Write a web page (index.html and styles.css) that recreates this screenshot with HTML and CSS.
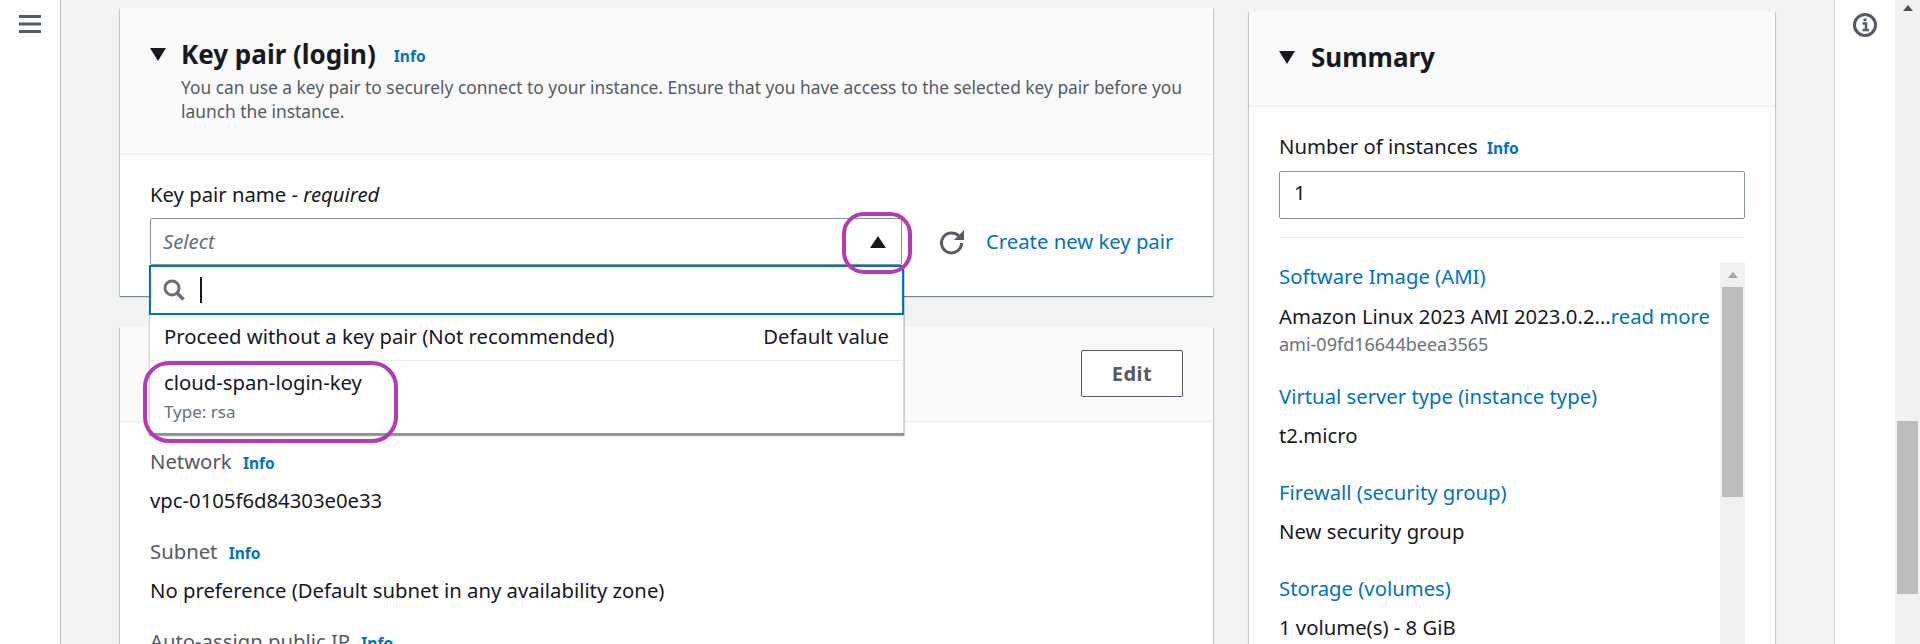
FILE: index.html
```html
<!DOCTYPE html>
<html lang="en">

<head>
	<meta charset="utf-8" />
	<title>Launch an instance</title>
	<link rel="stylesheet" href="styles.css">
</head>

<body>
	<div class="page">
		<nav class="side_nav">
			<svg class="menu_icon" width="22" height="18" viewBox="0 0 22 18"><path d="M0 1.500h22M0 9h22M0 16.500h22" stroke="#545b64" stroke-width="3" fill="none" /></svg>
		</nav>

		<main class="form_col">
			<section class="card keypair_card">
				<header class="card_head">
					<div class="head_title">
						<span class="caret"></span>
						<h2>Key pair (login)</h2>
						<a class="info">Info</a>
					</div>
					<p class="head_desc">You can use a key pair to securely connect to your instance. Ensure that you have access to the selected key pair before you launch the instance.</p>
				</header>
				<div class="keypair_body">
					<div class="field_label">Key pair name - <em>required</em></div>
					<div class="keypair_row">
						<div class="select_wrap">
							<div class="select_box">
								<span class="placeholder">Select</span>
								<span class="caret_up"></span>
							</div>
							<div class="dropdown">
								<div class="search_box">
									<svg width="22" height="22" viewBox="0 0 22 22"><circle cx="9" cy="9" r="7" fill="none" stroke="#687078" stroke-width="3" /><path d="M14 14l6.500 6.500" stroke="#687078" stroke-width="3.500" fill="none" /></svg>
									<span class="text_cursor"></span>
								</div>
								<div class="option option_first">
									<span>Proceed without a key pair (Not recommended)</span>
									<span>Default value</span>
								</div>
								<div class="option option_last">
									<div>cloud-span-login-key</div>
									<div class="option_type">Type: rsa</div>
								</div>
							</div>
							<span class="mark mark_caret"></span>
							<span class="mark mark_option"></span>
						</div>
						<svg class="refresh_icon" width="26" height="26" viewBox="0 0 26 26"><path d="M19.500 6.800A10 10 0 1 0 22.500 14" fill="none" stroke="#545b64" stroke-width="3" /><path d="M25 1v10H15z" fill="#545b64" /></svg>
						<a class="link create_link">Create new key pair</a>
					</div>
				</div>
			</section>

			<section class="card network_card">
				<header class="card_head network_head">
					<button class="edit_btn">Edit</button>
				</header>
				<div class="network_body">
					<div class="net_item">
						<div class="net_label">Network <a class="info">Info</a></div>
						<div class="net_value">vpc-0105f6d84303e0e33</div>
					</div>
					<div class="net_item">
						<div class="net_label">Subnet <a class="info">Info</a></div>
						<div class="net_value">No preference (Default subnet in any availability zone)</div>
					</div>
					<div class="net_item">
						<div class="net_label">Auto-assign public IP <a class="info">Info</a></div>
					</div>
				</div>
			</section>
		</main>

		<aside class="summary_col">
			<section class="card summary_card">
				<header class="summary_head">
					<span class="caret"></span>
					<h2>Summary</h2>
				</header>
				<div class="summary_body">
					<div class="field_label">Number of instances <a class="info">Info</a></div>
					<div class="count_input">1</div>
					<hr class="divider" />
					<div class="summary_scroll">
						<div class="summary_list">
							<div class="sum_item sum_item_first">
								<a class="link">Software Image (AMI)</a>
								<div class="sum_value">Amazon Linux 2023 AMI 2023.0.2...<a class="link">read more</a></div>
								<div class="sum_sub">ami-09fd16644beea3565</div>
							</div>
							<div class="sum_item">
								<a class="link">Virtual server type (instance type)</a>
								<div class="sum_value">t2.micro</div>
							</div>
							<div class="sum_item">
								<a class="link">Firewall (security group)</a>
								<div class="sum_value">New security group</div>
							</div>
							<div class="sum_item">
								<a class="link">Storage (volumes)</a>
								<div class="sum_value">1 volume(s) - 8 GiB</div>
							</div>
						</div>
						<div class="scrollbar inner_bar">
							<span class="scroll_arrow"></span>
							<span class="scroll_thumb"></span>
						</div>
					</div>
				</div>
			</section>
		</aside>

		<div class="help_panel">
			<svg width="24" height="24" viewBox="0 0 24 24"><circle cx="12" cy="12" r="10.500" fill="none" stroke="#545b64" stroke-width="3" /><path d="M9.500 10.500h3.500v6M9.500 17h6.500M10.500 6.800h3" fill="none" stroke="#545b64" stroke-width="2.500" /></svg>
		</div>

		<div class="scrollbar page_bar">
			<span class="scroll_arrow"></span>
			<span class="scroll_thumb"></span>
		</div>
	</div>
</body>

</html>
```

FILE: styles.css
```css
html, body {
	margin: 0;
	height: 644px;
	overflow: hidden;
}

body {
	background: #f2f3f3;
	color: #16191f;
	font-family: "Noto Sans", sans-serif;
	font-size: 20.300px;
	line-height: 24px;
}

h2 {
	margin: 0;
	font-size: 26px;
	line-height: 30px;
	font-weight: 700;
}

p {
	margin: 0;
}

.page {
	display: flex;
	height: 644px;
	overflow: hidden;
}

/* side navigation */
.side_nav {
	flex: none;
	width: 41px;
	background: #fff;
	border-right: 1px solid #b9bfbf;
	padding: 15px 0 0 19px;
}

.menu_icon {
	display: block;
}

/* cards */
.card {
	background: #fff;
	box-shadow: 0 1px 1px 0 rgba(0, 28, 36, .3), 1px 1px 1px 0 rgba(0, 28, 36, .15), -1px 1px 1px 0 rgba(0, 28, 36, .15);
}

.form_col {
	flex: none;
	width: 1093px;
	margin-left: 59px;
	padding-top: 8px;
}

.summary_col {
	flex: none;
	width: 526px;
	margin-left: 36px;
	padding-top: 11px;
}

.card_head {
	box-sizing: border-box;
	background: #fafafa;
	border-bottom: 1px solid #eaeded;
	height: 147px;
	padding: 31px 30px 0;
}

.head_title {
	display: flex;
	align-items: center;
}

.caret {
	flex: none;
	width: 0;
	height: 0;
	border-left: 8px solid transparent;
	border-right: 8px solid transparent;
	border-top: 13px solid #16191f;
	margin-right: 15px;
}

.head_title .info {
	margin-left: 18px;
	padding-top: 3px;
}

.head_desc {
	margin: 6px 0 0 31px;
	color: #545b64;
	font-size: 17.350px;
	line-height: 24px;
}

.info {
	color: #0073bb;
	font-size: 15.500px;
	font-weight: 700;
}

.link {
	color: #0073bb;
}

.keypair_body {
	height: 141px;
	padding: 27px 30px 0;
	box-sizing: border-box;
}

.field_label {
	line-height: 24px;
}

.keypair_row {
	display: flex;
	align-items: flex-start;
	margin-top: 12px;
}

.select_wrap {
	position: relative;
	width: 752px;
}

.select_box {
	box-sizing: border-box;
	height: 47px;
	border: 1px solid #879596;
	border-radius: 2px;
	background: #fff;
	display: flex;
	align-items: center;
	justify-content: space-between;
	padding: 0 15px 0 12px;
}

.placeholder {
	color: #687078;
	font-style: italic;
	margin-top: -2px;
}

.caret_up {
	width: 0;
	height: 0;
	border-left: 8px solid transparent;
	border-right: 8px solid transparent;
	border-bottom: 12px solid #16191f;
}

.refresh_icon {
	flex: none;
	margin: 11px 0 0 37px;
}

.create_link {
	margin: 11px 0 0 21px;
}

/* dropdown sits over the cards below */
.dropdown {
	position: absolute;
	left: -1px;
	top: 47px;
	width: 755px;
	background: #fff;
	z-index: 2;
	box-shadow: 0 1px 1px 0 rgba(0, 28, 36, .3), 1px 1px 1px 0 rgba(0, 28, 36, .15);
	border-bottom: 2px solid #879596;
	box-sizing: border-box;
}

.search_box {
	box-sizing: border-box;
	height: 50px;
	border: 2px solid #0073bb;
	display: flex;
	align-items: center;
	padding-left: 12px;
}

.text_cursor {
	width: 2px;
	height: 26px;
	background: #16191f;
	margin-left: 15px;
}

.option {
	border-left: 1px solid #d5dbdb;
	border-right: 1px solid #d5dbdb;
	padding: 0 14px;
}

.option_first {
	box-sizing: border-box;
	height: 46px;
	padding-bottom: 4px;
	display: flex;
	align-items: center;
	justify-content: space-between;
	border-bottom: 1px solid #eaeded;
}

.option_last {
	height: 72px;
	box-sizing: border-box;
	padding-top: 9px;
}

.option_type {
	color: #687078;
	font-size: 17px;
	margin-top: 6px;
}

/* purple hand drawn marks of the screenshot */
.mark {
	position: absolute;
	border: 4px solid #b53ab5;
	box-sizing: border-box;
	z-index: 3;
}

.mark_caret {
	left: 692px;
	top: -6px;
	width: 70px;
	height: 62px;
	border-radius: 22px;
}

.mark_option {
	left: -7px;
	top: 143px;
	width: 255px;
	height: 82px;
	border-radius: 26px;
}

/* network settings */
.network_card {
	margin-top: 31px;
}

.network_head {
	height: 95px;
	padding: 23px 30px 0 0;
	display: flex;
	justify-content: flex-end;
	align-items: flex-start;
}

.edit_btn {
	width: 102px;
	height: 47px;
	background: #fff;
	border: 1px solid #545b64;
	border-radius: 2px;
	color: #545b64;
	font-family: inherit;
	font-size: 20px;
	font-weight: 700;
	letter-spacing: .5px;
}

.network_body {
	padding: 27px 30px 0;
}

.net_item {
	height: 90px;
}

.net_label {
	color: #545b64;
	line-height: 24px;
}

.net_label .info {
	margin-left: 6px;
}

.net_value {
	margin-top: 13px;
	line-height: 24px;
}

/* summary */
.summary_head {
	box-sizing: border-box;
	height: 96px;
	background: #fafafa;
	border-bottom: 1px solid #eaeded;
	padding: 31px 30px 0;
	display: flex;
	align-items: flex-start;
}

.summary_head .caret {
	margin-top: 9px;
}

.summary_head h2 {
	margin-left: 1px;
}

.summary_body {
	padding: 27px 30px 0;
}

.summary_body .info {
	margin-left: 4px;
}

.count_input {
	box-sizing: border-box;
	height: 48px;
	margin-top: 11px;
	border: 1px solid #879596;
	border-radius: 2px;
	padding: 8px 14px;
}

.divider {
	border: 0;
	border-top: 1px solid #eaeded;
	margin: 18px 0 24px;
}

.summary_scroll {
	display: flex;
	justify-content: space-between;
	height: 400px;
}

.summary_list {
	padding-top: 2px;
}

.sum_item {
	margin-bottom: 33px;
}

.sum_item_first {
	margin-bottom: 28px;
}

.sum_item > .link {
	display: block;
	line-height: 24px;
}

.sum_value {
	margin-top: 15px;
	line-height: 24px;
}

.sum_item_first .sum_value {
	margin-top: 16px;
}

.sum_sub {
	color: #687078;
	font-size: 18px;
	line-height: 24px;
	margin-top: 4px;
}

/* help panel and scrollbars */
.help_panel {
	flex: none;
	box-sizing: border-box;
	width: 61px;
	margin-left: 59px;
	background: #fff;
	border-left: 1px solid #d5dbdb;
	padding: 13px 0 0 18px;
}

.help_panel svg {
	display: block;
}

.scrollbar {
	flex: none;
	background: #f1f1f1;
	display: flex;
	flex-direction: column;
	align-items: center;
}

.page_bar {
	width: 25px;
}

.inner_bar {
	width: 25px;
}

.scroll_arrow {
	width: 0;
	height: 0;
	border-left: 5.500px solid transparent;
	border-right: 5.500px solid transparent;
	border-bottom: 6px solid #505050;
	margin-top: 5px;
}

.inner_bar .scroll_arrow {
	border-bottom-color: #a3a3a3;
	margin-top: 10px;
}

.scroll_thumb {
	width: 21px;
	background: #bdbdbd;
}

.page_bar .scroll_thumb {
	height: 173px;
	margin-top: 410px;
}

.inner_bar .scroll_thumb {
	height: 210px;
	margin-top: 9px;
}
```
